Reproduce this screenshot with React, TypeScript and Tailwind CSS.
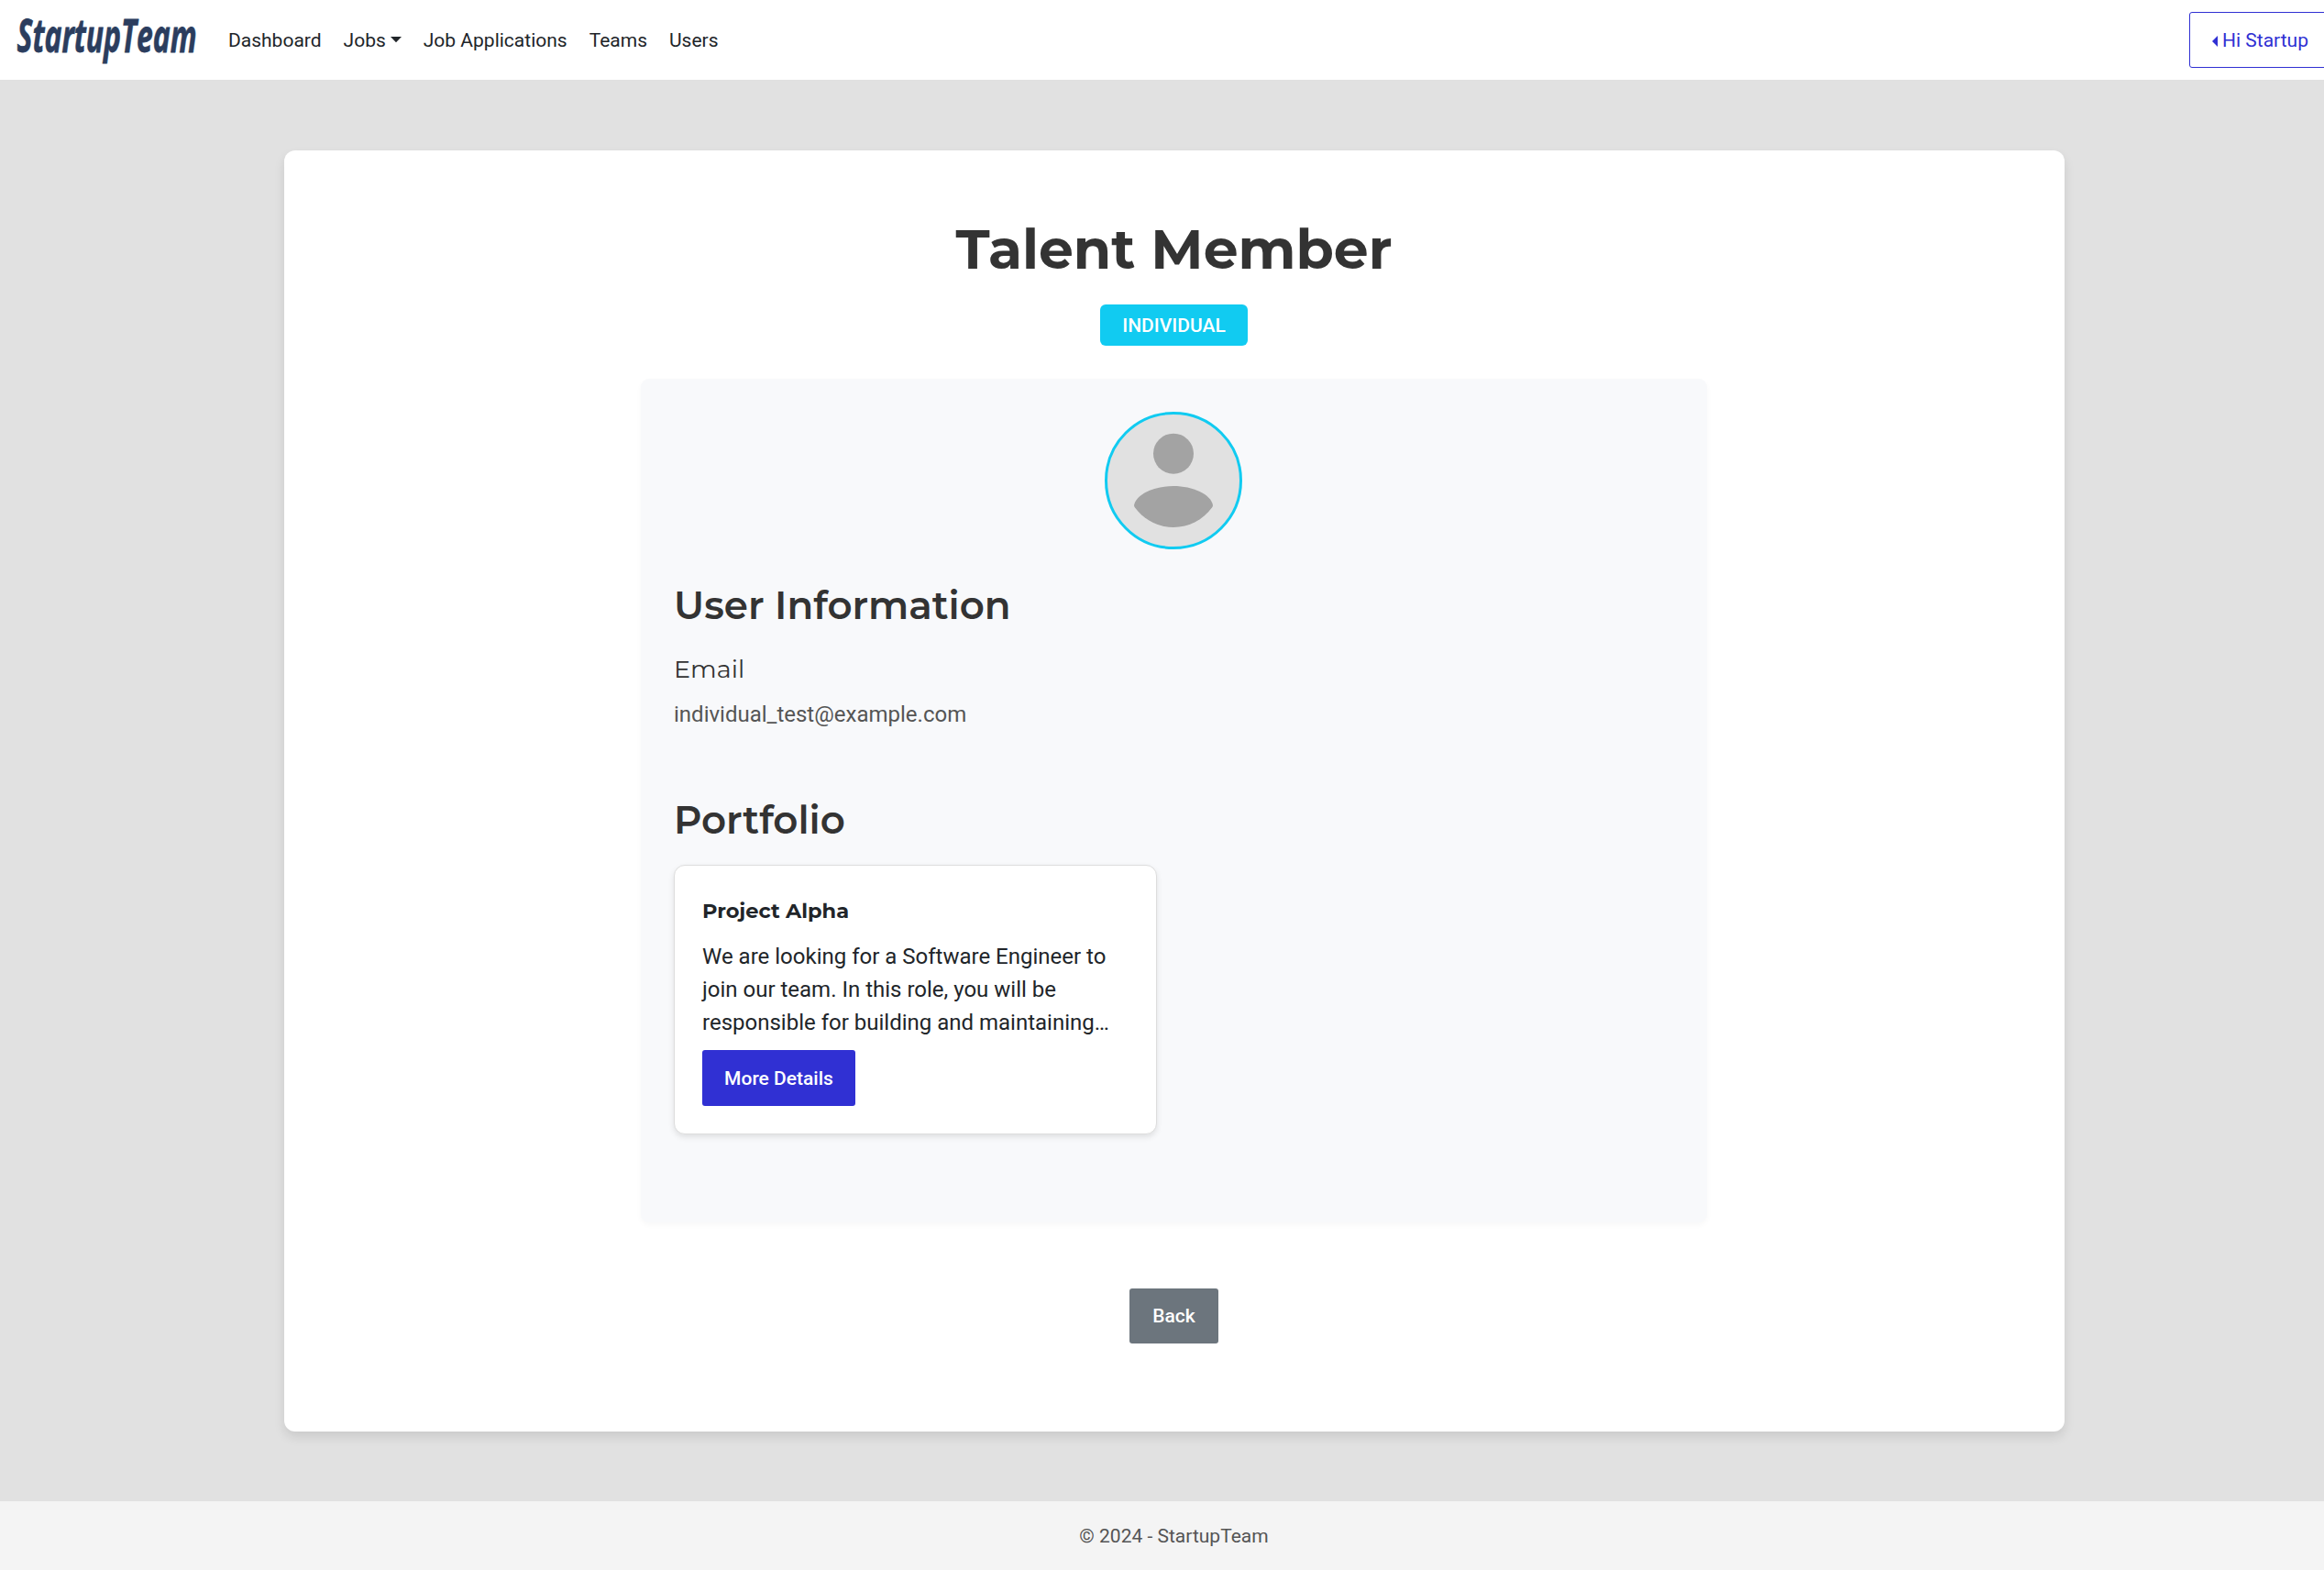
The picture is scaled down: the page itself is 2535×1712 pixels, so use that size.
const navLinks = ["Job Applications", "Teams", "Users"];

function Logo() {
  return (
    <svg width="200" height="60" viewBox="0 0 200 60" className="block shrink-0 overflow-visible" role="img" aria-label="StartupTeam">
      <text
        x="1.500"
        y="42.500"
        textLength="196"
        lengthAdjust="spacingAndGlyphs"
        fontFamily="'Open Sans', 'Noto Sans', sans-serif"
        fontWeight="700"
        fontStyle="italic"
        fontSize="51"
        fill="#2b3d5e"
        stroke="#2b3d5e"
        strokeWidth="0.8"
      >
        StartupTeam
      </text>
    </svg>
  );
}

function Navbar() {
  return (
    <header className="flex h-[87px] items-center bg-white pl-[17px]">
      <Logo />
      <nav className="ml-[32px] mt-[2px] flex items-center gap-[24px] text-[21px] text-[#212529]">
        <a>Dashboard</a>
        <a className="flex items-center">
          Jobs
          <svg width="12" height="7" viewBox="0 0 12 7" className="ml-[5px] mb-[2px]">
            <path d="M0 0h12L6 6.3z" fill="currentColor" />
          </svg>
        </a>
        {navLinks.map((label) => (
          <a key={label}>{label}</a>
        ))}
      </nav>
      <button className="ml-auto flex h-[61px] w-[173px] items-center rounded-[3px] border border-[#3030d3] pl-[24px] pt-[2px] text-[21px] text-[#3030d3]">
        <svg width="6" height="12" viewBox="0 0 6 12" className="mr-[5px]">
          <path d="M6 0v12L0 6z" fill="currentColor" />
        </svg>
        Hi Startup
      </button>
    </header>
  );
}

function Avatar() {
  return (
    <svg width="150" height="150" viewBox="0 0 150 150" className="mx-auto block">
      <circle cx="75" cy="75" r="73.5" fill="#e1e1e1" stroke="#11cbf1" strokeWidth="3" />
      <circle cx="75" cy="45.7" r="22" fill="#a3a3a3" />
      <path d="M32 102C34 90 54 81 75 81s41 9 43 21c0 1-.3 1.6-1 2.600C107 118 92 126 75 126s-32-8-42-21.400c-.7-1-1-1.600-1-2.600z" fill="#a3a3a3" />
    </svg>
  );
}

const montserrat = "font-['Montserrat','Inter',sans-serif]";

export default function App() {
  return (
    <div className="h-[1712px] w-full overflow-hidden bg-[#e1e1e1] font-['Roboto',sans-serif]">
      <div className="flex h-full w-[2561px] flex-col">
        <Navbar />
        <main className="flex flex-1 flex-col items-center pt-[77px]">
          <section className="flex h-[1397px] w-[1942px] flex-col items-center rounded-[12px] bg-white shadow-[0_6px_12px_rgba(0,0,0,0.1)]">
            <h1 className={"mt-[72px] h-[72px] whitespace-nowrap text-[60px] leading-[72px] font-bold text-[#333] " + montserrat}>
              Talent Member
            </h1>
            <span className="mt-[24px] flex h-[45px] w-[161px] items-center justify-center rounded-[6px] bg-[#11cbf1] pt-[2px] text-[21px] font-medium text-white">
              INDIVIDUAL
            </span>
            <div className="mt-[36px] h-[920px] w-[1163px] rounded-[9px] bg-[#f8f9fb] pt-[36px] pr-[37px] pl-[36px] shadow-[0_3px_6px_rgba(0,0,0,0.03)]">
              <Avatar />
              <h2 className={"mt-[36px] h-[51px] whitespace-nowrap text-[42px] leading-[51px] font-semibold text-[#333] " + montserrat}>
                User Information
              </h2>
              <h3 className={"mt-[27px] h-[33px] text-[27px] leading-[33px] text-[#333] " + montserrat}>
                Email
              </h3>
              <p className="mt-[15px] h-[36px] text-[24px] leading-[36px] text-[#555]">individual_test@example.com</p>
              <h2 className={"mt-[72px] h-[51px] whitespace-nowrap text-[42px] leading-[51px] font-semibold text-[#333] " + montserrat}>
                Portfolio
              </h2>
              <article className="mt-[23px] h-[294px] w-[527px] rounded-[12px] border border-[#ddd] bg-white px-[30px] pt-[35px] text-[#212529] shadow-[0_3px_6px_rgba(0,0,0,0.1)]">
                <h4 className={"h-[28px] text-[22.5px] leading-[28px] font-bold " + montserrat}>
                  Project Alpha
                </h4>
                <p className="mt-[18px] text-[24px] leading-[36px] whitespace-nowrap">
                  We are looking for a Software Engineer to
                  <br />
                  join our team. In this role, you will be
                  <br />
                  responsible for building and maintaining…
                </p>
                <button className="mt-[12px] flex h-[61px] w-[167px] items-center justify-center rounded-[3px] bg-[#3030d3] pt-[2px] text-[21px] font-medium text-white">
                  More Details
                </button>
              </article>
            </div>
            <button className="mt-[72px] flex h-[60px] w-[97px] items-center justify-center rounded-[3px] bg-[#6c757d] pt-px text-[21px] font-medium text-white">
              Back
            </button>
          </section>
        </main>
        <footer className="flex h-[75px] items-center justify-center bg-[#f4f4f4] pt-[2px] text-[21px] text-[#555]">
          © 2024 - StartupTeam
        </footer>
      </div>
    </div>
  );
}
